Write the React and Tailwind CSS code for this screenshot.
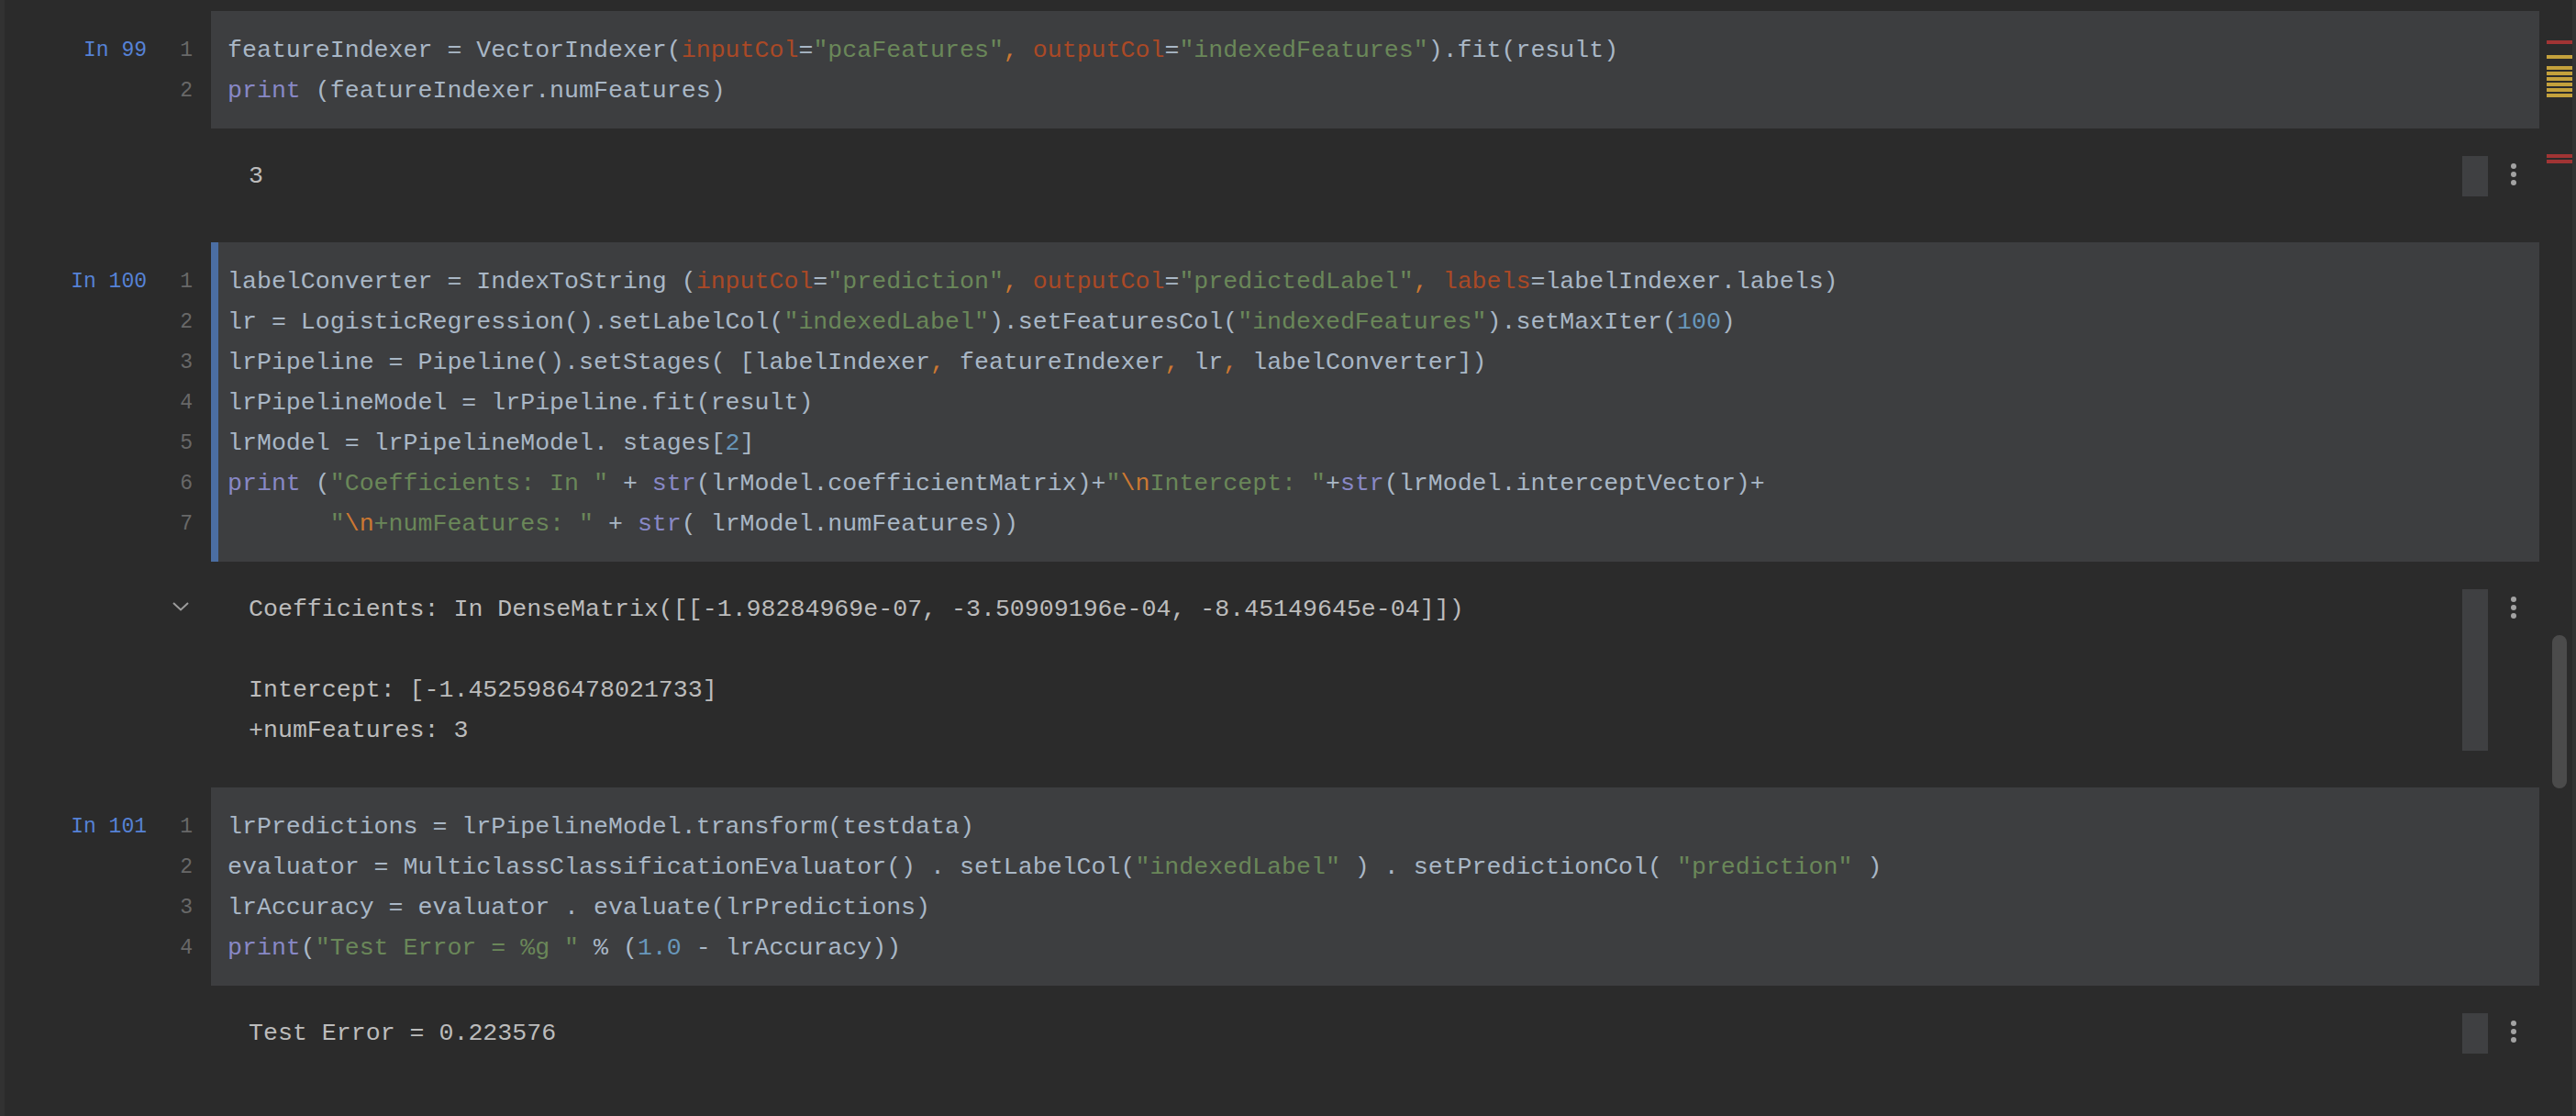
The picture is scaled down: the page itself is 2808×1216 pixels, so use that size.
import React from "react";

const tone = {
  d: "text-[#a9b7c6]",
  p: "text-[#aa4926]",
  s: "text-[#6a8759]",
  c: "text-[#cc7832]",
  n: "text-[#6897bb]",
  b: "text-[#8888c6]",
};

const cells = [
  {
    label: "In 99",
    active: false,
    lines: [
      [
        ["d", "featureIndexer = VectorIndexer("],
        ["p", "inputCol"],
        ["d", "="],
        ["s", '"pcaFeatures"'],
        ["c", ","],
        ["d", " "],
        ["p", "outputCol"],
        ["d", "="],
        ["s", '"indexedFeatures"'],
        ["d", ").fit(result)"],
      ],
      [
        ["b", "print"],
        ["d", " (featureIndexer.numFeatures)"],
      ],
    ],
    output: ["3"],
    outTop: "pt-[30px] pb-[50px]",
    boxH: "h-[44px]",
    chevron: false,
  },
  {
    label: "In 100",
    active: true,
    lines: [
      [
        ["d", "labelConverter = IndexToString ("],
        ["p", "inputCol"],
        ["d", "="],
        ["s", '"prediction"'],
        ["c", ","],
        ["d", " "],
        ["p", "outputCol"],
        ["d", "="],
        ["s", '"predictedLabel"'],
        ["c", ","],
        ["d", " "],
        ["p", "labels"],
        ["d", "=labelIndexer.labels)"],
      ],
      [
        ["d", "lr = LogisticRegression().setLabelCol("],
        ["s", '"indexedLabel"'],
        ["d", ").setFeaturesCol("],
        ["s", '"indexedFeatures"'],
        ["d", ").setMaxIter("],
        ["n", "100"],
        ["d", ")"],
      ],
      [
        ["d", "lrPipeline = Pipeline().setStages( [labelIndexer"],
        ["c", ","],
        ["d", " featureIndexer"],
        ["c", ","],
        ["d", " lr"],
        ["c", ","],
        ["d", " labelConverter])"],
      ],
      [["d", "lrPipelineModel = lrPipeline.fit(result)"]],
      [
        ["d", "lrModel = lrPipelineModel. stages["],
        ["n", "2"],
        ["d", "]"],
      ],
      [
        ["b", "print"],
        ["d", " ("],
        ["s", '"Coefficients: In "'],
        ["d", " + "],
        ["b", "str"],
        ["d", "(lrModel.coefficientMatrix)+"],
        ["s", '"'],
        ["c", "\\n"],
        ["s", 'Intercept: "'],
        ["d", "+"],
        ["b", "str"],
        ["d", "(lrModel.interceptVector)+"],
      ],
      [
        ["d", "       "],
        ["s", '"'],
        ["c", "\\n"],
        ["s", '+numFeatures: "'],
        ["d", " + "],
        ["b", "str"],
        ["d", "( lrModel.numFeatures))"],
      ],
    ],
    output: [
      "Coefficients: In DenseMatrix([[-1.98284969e-07, -3.50909196e-04, -8.45149645e-04]])",
      "",
      "Intercept: [-1.4525986478021733]",
      "+numFeatures: 3",
    ],
    outTop: "pt-[30px] pb-[40px]",
    boxH: "h-[176px]",
    chevron: true,
  },
  {
    label: "In 101",
    active: false,
    lines: [
      [["d", "lrPredictions = lrPipelineModel.transform(testdata)"]],
      [
        ["d", "evaluator = MulticlassClassificationEvaluator() . setLabelCol("],
        ["s", '"indexedLabel"'],
        ["d", " ) . setPredictionCol( "],
        ["s", '"prediction"'],
        ["d", " )"],
      ],
      [["d", "lrAccuracy = evaluator . evaluate(lrPredictions)"]],
      [
        ["b", "print"],
        ["d", "("],
        ["s", '"Test Error = %g "'],
        ["d", " % ("],
        ["n", "1.0"],
        ["d", " - lrAccuracy))"],
      ],
    ],
    output: ["Test Error = 0.223576"],
    outTop: "pt-[30px] pb-[40px]",
    boxH: "h-[44px]",
    chevron: false,
  },
];

const Dots = () => (
  <div className="flex w-[56px] justify-center pt-[8px]">
    <div className="flex flex-col gap-[3px]">
      <span className="h-[6px] w-[6px] rounded-full bg-[#a3a3a3]" />
      <span className="h-[6px] w-[6px] rounded-full bg-[#a3a3a3]" />
      <span className="h-[6px] w-[6px] rounded-full bg-[#a3a3a3]" />
    </div>
  </div>
);

const Cell = ({ cell }) => (
  <div className="flex flex-col">
    {/* code */}
    <div className="flex">
      <div className="w-[155px] pt-[21px] text-right text-[23px] leading-[44px] text-[#5682d6]">
        {cell.label}
      </div>
      <div className="w-[50px] pt-[21px] text-right text-[23px] leading-[44px] text-[#686868]">
        {cell.lines.map((_, i) => (
          <div key={i}>{i + 1}</div>
        ))}
      </div>
      <div className="w-[20px]" />
      <div
        className={
          cell.active
            ? "flex-1 border-l-[8px] border-[#4b6ea3] bg-[#3d3e40] pt-[21px] pb-[19px] pl-[10px]"
            : "flex-1 bg-[#3d3e40] pt-[21px] pb-[19px] pl-[18px]"
        }
      >
        {cell.lines.map((line, i) => (
          <div key={i} className="h-[44px] whitespace-pre leading-[44px]">
            {line.map(([t, s], j) => (
              <span key={j} className={tone[t]}>
                {s}
              </span>
            ))}
          </div>
        ))}
      </div>
    </div>

    {/* output */}
    <div className={"flex " + cell.outTop}>
      <div className="flex w-[266px] justify-end pr-[65px]">
        {cell.chevron && (
          <svg width="18" height="10" viewBox="0 0 18 10" className="mt-[14px]">
            <polyline
              points="1,1 9,8.5 17,1"
              fill="none"
              stroke="#9c9c9c"
              strokeWidth="2"
            />
          </svg>
        )}
      </div>
      <div className="flex-1 text-[#bcbcbc]">
        {cell.output.map((l, i) => (
          <div key={i} className="h-[44px] whitespace-pre leading-[44px]">
            {l}
          </div>
        ))}
      </div>
      <div className={"w-[28px] bg-[#3f4042] " + cell.boxH} />
      <Dots />
    </div>
  </div>
);

const App = () => {
  const yellow = [60, 72, 78, 84, 90, 96, 102];
  const red = [44, 168, 174];
  return (
    <div className="flex h-[1216px] w-[2808px] overflow-hidden bg-[#2b2b2b] font-['Liberation_Mono',monospace] text-[26.6px]">
      {/* left strip */}
      <div className="w-[5px] bg-[#323232]" />

      {/* notebook */}
      <div className="flex flex-1 flex-col pt-[12px]">
        {cells.map((c) => (
          <Cell key={c.label} cell={c} />
        ))}
      </div>

      {/* error stripe + scrollbar */}
      <div className="relative w-[36px]">
        {red.map((y) => (
          <div
            key={"r" + y}
            className="absolute left-[8px] h-[4px] w-[28px] bg-[#a13434]"
            style={{ top: y }}
          />
        ))}
        {yellow.map((y) => (
          <div
            key={"y" + y}
            className="absolute left-[8px] h-[4px] w-[28px] bg-[#c4a13c]"
            style={{ top: y }}
          />
        ))}
        <div className="absolute left-[14px] top-[692px] h-[167px] w-[16px] rounded-full bg-[#4b4b4b]" />
      </div>
      <div className="w-[4px] bg-[#333333]" />
    </div>
  );
};

export default App;
